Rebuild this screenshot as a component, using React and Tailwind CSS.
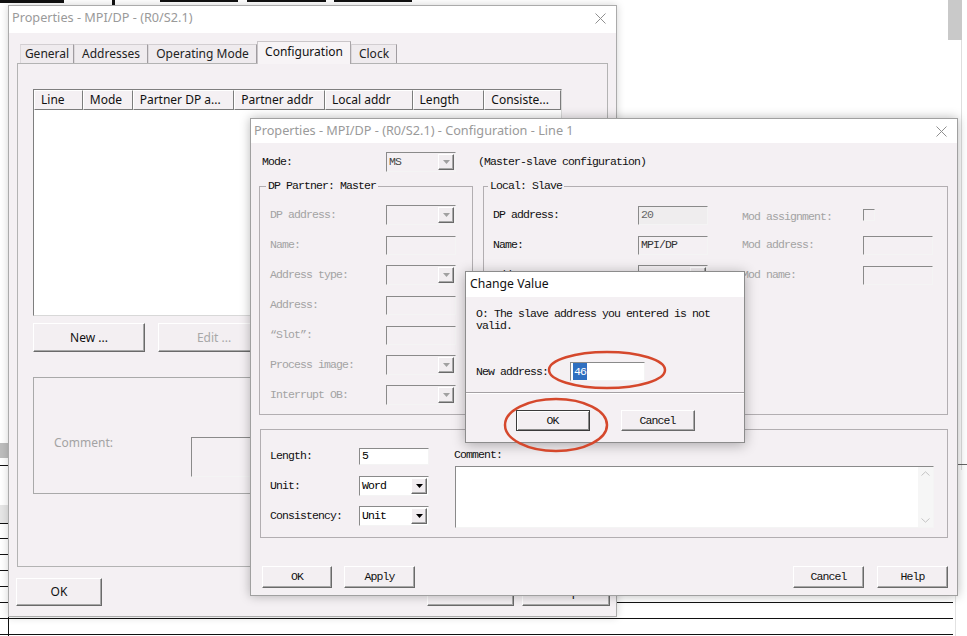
import React from "react";

const mono = "font-['Liberation_Mono','DejaVu_Sans_Mono',monospace] text-[11.5px] tracking-[-0.9px]";
const raised =
  "border border-t-[#ffffff] border-l-[#ffffff] border-b-[#6a6a6a] border-r-[#6a6a6a] shadow-[inset_-1px_-1px_0_#a8a8a8]";
const sunken =
  "border border-t-[#8a8a8a] border-l-[#8a8a8a] border-b-[#f4f4f4] border-r-[#f4f4f4]";

function CloseX({ color = "#8f8f8f" }) {
  return (
    <svg width="11" height="11" viewBox="0 0 11 11">
      <path d="M0.5 0.5L10.5 10.5M10.5 0.5L0.5 10.5" stroke={color} strokeWidth="1" />
    </svg>
  );
}

function Btn({ children, className = "", muted = false }) {
  return (
    <div
      className={`flex items-center justify-center bg-[#f3eff2] ${raised} ${
        muted ? "text-[#a8a8a8]" : "text-[#111]"
      } ${className}`}
    >
      {children}
    </div>
  );
}

function TextBox({ value = "", enabled = false, className = "" }) {
  return (
    <div
      className={`w-[70px] h-[19px] flex items-center pl-[2px] ${sunken} ${
        enabled ? "bg-white text-black" : "bg-[#f4f0f3] text-[#333]"
      } ${className}`}
    >
      {value}
    </div>
  );
}

function Combo({ value = "", enabled = false }) {
  return (
    <div
      className={`w-[70px] h-[20px] flex items-center ${sunken} ${
        enabled ? "bg-white text-black" : "bg-[#f4f0f3] text-[#444]"
      }`}
    >
      <span className="flex-1 pl-[2px]">{value}</span>
      <div className={`w-[16px] h-[16px] mr-[1px] flex items-center justify-center bg-[#f1edf0] ${raised}`}>
        <svg width="7" height="4" viewBox="0 0 7 4">
          <path d="M0 0H7L3.5 4Z" fill={enabled ? "#000" : "#a0a0a0"} />
        </svg>
      </div>
    </div>
  );
}

function Backdrop() {
  const hLines = [465, 523, 538, 554, 570, 586, 602];
  return (
    <svg className="absolute inset-0" width="967" height="636">
      <rect x="0" y="0" width="64" height="3" fill="#111" />
      <rect x="112" y="0" width="3" height="5" fill="#111" />
      <rect x="160" y="0" width="78" height="2" fill="#111" />
      <rect x="247" y="0" width="79" height="2" fill="#111" />
      <rect x="334" y="0" width="78" height="2" fill="#111" />
      <rect x="948" y="0" width="14" height="40" fill="#c9c9c9" />
      <line x1="961.5" y1="40" x2="961.5" y2="470" stroke="#dedede" />
      <line x1="955" y1="464.5" x2="967" y2="464.5" stroke="#666" />
      <rect x="0" y="443" width="8" height="15" fill="#bdbdbd" />
      <rect x="0" y="505" width="8" height="18" fill="#e6e6e6" />
      {hLines.map((y) => (
        <line key={y} x1="0" y1={y + 0.5} x2="8" y2={y + 0.5} stroke="#111" />
      ))}
      <line x1="8.5" y1="503" x2="8.5" y2="636" stroke="#111" />
      <line x1="617" y1="602.5" x2="953" y2="602.5" stroke="#111" />
      <line x1="0" y1="618.5" x2="953" y2="618.5" stroke="#111" />
      <line x1="0" y1="634.5" x2="953" y2="634.5" stroke="#111" />
      <line x1="955.5" y1="470" x2="955.5" y2="636" stroke="#e2e2e2" />
    </svg>
  );
}

function MainWindow() {
  const tabs = [
    ["General", "w-[54px]"],
    ["Addresses", "w-[74px]"],
    ["Operating Mode", "w-[109px]"],
    ["Configuration", "w-[94px]"],
    ["Clock", "w-[46px]"],
  ];
  const cols = [
    ["Line", "w-[49px]"],
    ["Mode", "w-[50px]"],
    ["Partner DP a...", "w-[102px]"],
    ["Partner addr", "w-[91px]"],
    ["Local addr", "w-[88px]"],
    ["Length", "w-[72px]"],
    ["Consiste...", "w-[77px]"],
  ];

  return (
    <div className="absolute left-[8px] top-[5px] w-[609px] h-[612px] flex flex-col border border-[#ababab] bg-[#f4f0f3] text-[12px] shadow-[0_0_8px_rgba(0,0,0,0.18)]">
      <div className="h-[27px] flex items-center justify-between bg-white pl-[3px] pr-[10px] pb-[3px] text-[12.7px] text-[#9a9a9a]">
        <span>Properties - MPI/DP - (R0/S2.1)</span>
        <CloseX />
      </div>

      <div className="flex-1 flex flex-col px-[8px] pt-[8px]">
        <div className="relative z-10 h-[22px] flex items-end pl-[3px]">
          {tabs.map(([label, w]) =>
            label === "Configuration" ? (
              <div
                key={label}
                className={`${w} h-[23px] -mb-[1px] flex items-center justify-center pb-[2px] border-t border-l border-r border-t-[#c9c5c8] border-l-[#c9c5c8] border-r-[#a9a5a8] bg-[#f7f4f6] text-[#111]`}
              >
                {label}
              </div>
            ) : (
              <div
                key={label}
                className={`${w} h-[19px] flex items-center justify-center border-t border-l border-r border-t-[#d2ced1] border-l-[#dcd8db] border-r-[#a09ca0] bg-[#efebee] text-[#222]`}
              >
                {label}
              </div>
            )
          )}
        </div>

        <div className="w-[591px] h-[504px] flex flex-col border border-[#b3b3b3] bg-[#f4f0f3] pl-[15px] pt-[25px]">
          <div className="w-[529px] h-[227px] flex flex-col border border-t-[#7e7e7e] border-l-[#7e7e7e] border-b-[#d8d8d8] border-r-[#d8d8d8] bg-white">
            <div className="h-[20px] flex">
              {cols.map(([label, w]) => (
                <div
                  key={label}
                  className={`${w} h-[20px] flex items-center pl-[6px] bg-[#f4f0f3] border-r border-b border-r-[#7c7c7c] border-b-[#7c7c7c] border-t border-l border-t-white border-l-white text-[#111] whitespace-nowrap overflow-hidden`}
                >
                  {label}
                </div>
              ))}
            </div>
          </div>

          <div className="mt-[7px] flex gap-[13px]">
            <Btn className="w-[112px] h-[29px]">New ...</Btn>
            <Btn className="w-[112px] h-[29px]" muted>
              Edit ...
            </Btn>
          </div>

          <div className="mt-[25px] w-[530px] h-[117px] flex items-start border border-[#a9a9a9] pl-[20px] pt-[58px]">
            <span className="w-[137px] leading-[14px] text-[#a3a3a3]">Comment:</span>
            <div className={`w-[300px] h-[40px] mt-[1px] bg-[#f4f0f3] ${sunken}`} />
          </div>
        </div>

        <div className="mt-[11px] -ml-[1px] -mr-[2px] flex justify-between">
          <Btn className="w-[86px] h-[28px]">OK</Btn>
          <div className="flex gap-[8px]">
            <Btn className="w-[87px] h-[28px]">Cancel</Btn>
            <Btn className="w-[88px] h-[28px]">Help</Btn>
          </div>
        </div>
      </div>
    </div>
  );
}

function LineWindow() {
  const partner = [
    ["DP address:", "combo"],
    ["Name:", "text"],
    ["Address type:", "combo"],
    ["Address:", "text"],
    ["\u201CSlot\u201D:", "text"],
    ["Process image:", "combo"],
    ["Interrupt OB:", "combo"],
  ];

  return (
    <div className="absolute left-[250px] top-[118px] w-[708px] h-[478px] flex flex-col border border-[#a0a0a0] bg-[#f4f0f3] shadow-[0_0_10px_rgba(0,0,0,0.28)]">
      <div className="h-[24px] flex items-center justify-between bg-white pl-[3px] pr-[10px] text-[12.7px] text-[#9a9a9a]">
        <span>Properties - MPI/DP - (R0/S2.1) - Configuration - Line 1</span>
        <CloseX />
      </div>

      <div className={`flex-1 flex flex-col px-[8px] pt-[9px] text-[#111] ${mono}`}>
        <div className="h-[19px] flex items-center">
          <span className="w-[127px] pl-[3px]">Mode:</span>
          <Combo value="MS" />
          <span className="ml-[22px]">(Master-slave configuration)</span>
        </div>

        <div className="mt-[9px] flex gap-[10px]">
          <fieldset className="w-[214px] border border-[#b2aeb1] pl-[10px] pt-[8px] pb-[4px]">
            <legend className="-ml-[4px] px-[2px] leading-[12px]">DP Partner: Master</legend>
            {partner.map(([label, kind]) => (
              <div key={label} className="h-[30px] flex items-center">
                <span className="w-[116px] text-[#a3a3a3]">{label}</span>
                {kind === "combo" ? <Combo /> : <TextBox />}
              </div>
            ))}
          </fieldset>

          <fieldset className="w-[465px] border border-[#b2aeb1] pl-[9px] pt-[8px]">
            <legend className="-ml-[5px] px-[2px] leading-[12px]">Local: Slave</legend>
            <div className="h-[30px] flex items-center">
              <span className="w-[145px]">DP address:</span>
              <TextBox value="20" className="!bg-[#efedee] !text-[#666]" />
              <span className="ml-[34px] w-[121px] text-[#a3a3a3] pt-[4px]">Mod assignment:</span>
              <div className={`w-[12px] h-[12px] bg-[#f4f0f3] ${sunken}`} />
            </div>
            <div className="h-[30px] flex items-center">
              <span className="w-[145px]">Name:</span>
              <TextBox value="MPI/DP" />
              <span className="ml-[34px] w-[121px] text-[#a3a3a3]">Mod address:</span>
              <TextBox />
            </div>
            <div className="h-[30px] flex items-center">
              <span className="w-[145px]">Address type:</span>
              <Combo />
              <span className="ml-[34px] w-[121px] text-[#a3a3a3]">Mod name:</span>
              <TextBox />
            </div>
          </fieldset>
        </div>

        <div className="mt-[14px] ml-[1px] w-[688px] h-[109px] flex border border-[#b2aeb1] pl-[9px] pt-[11px]">
          <div className="flex flex-col">
            <div className="h-[30px] flex items-center">
              <span className="w-[89px]">Length:</span>
              <TextBox value="5" enabled className="!h-[17px]" />
            </div>
            <div className="h-[30px] flex items-center">
              <span className="w-[89px]">Unit:</span>
              <Combo value="Word" enabled />
            </div>
            <div className="h-[30px] flex items-center">
              <span className="w-[89px]">Consistency:</span>
              <Combo value="Unit" enabled />
            </div>
          </div>
          <div className="ml-[25px] flex flex-col">
            <span className="mt-[8px] leading-[12px]">Comment:</span>
            <div className={`mt-[5px] ml-[1px] w-[479px] h-[62px] flex justify-end bg-white ${sunken}`}>
              <div className="w-[15px] flex flex-col justify-between items-center py-[4px] bg-[#f6f6f6]">
                <svg width="9" height="5" viewBox="0 0 9 5">
                  <path d="M0.5 4.5L4.5 0.8L8.5 4.5" fill="none" stroke="#c4c4c4" />
                </svg>
                <svg width="9" height="5" viewBox="0 0 9 5">
                  <path d="M0.5 0.5L4.5 4.2L8.5 0.5" fill="none" stroke="#c4c4c4" />
                </svg>
              </div>
            </div>
          </div>
        </div>

        <div className="mt-[28px] ml-[3px] mr-[1px] flex justify-between">
          <div className="flex gap-[12px]">
            <Btn className="w-[70px] h-[22px]">OK</Btn>
            <Btn className="w-[71px] h-[22px]">Apply</Btn>
          </div>
          <div className="flex gap-[13px]">
            <Btn className="w-[71px] h-[22px]">Cancel</Btn>
            <Btn className="w-[71px] h-[22px]">Help</Btn>
          </div>
        </div>
      </div>
    </div>
  );
}

function ChangeValue() {
  return (
    <div className="absolute left-[465px] top-[271px] w-[280px] h-[172px] flex flex-col border border-[#8c8c8c] bg-[#f4f0f3] shadow-[0_2px_12px_rgba(0,0,0,0.3)]">
      <div className="h-[25px] flex items-center bg-white pl-[4px] text-[12.2px] text-[#111]">Change Value</div>
      <div className={`flex-1 flex flex-col pt-[11px] text-[#111] ${mono}`}>
        <p className="w-[250px] pl-[10px] leading-[12px]">O: The slave address you entered is not valid.</p>
        <div className="mt-[30px] pl-[10px] h-[19px] flex items-center">
          <span className="w-[94px]">New address:</span>
          <div className={`w-[75px] h-[19px] flex items-center pl-[2px] bg-white ${sunken}`}>
            <span className="bg-[#2f6fc0] text-white px-[1px]">46</span>
          </div>
        </div>
        <div className="mt-[11px] border-t border-b border-t-[#a4a0a3] border-b-white" />
        <div className="mt-[16px] flex justify-center gap-[31px]">
          <Btn className="w-[74px] h-[21px] !border-[#3a3a3a] shadow-[inset_1px_1px_0_#fff,inset_-1px_-1px_0_#8a8a8a]">
            OK
          </Btn>
          <Btn className="w-[74px] h-[21px]">Cancel</Btn>
        </div>
      </div>
    </div>
  );
}

function Marks() {
  return (
    <svg className="absolute inset-0 pointer-events-none" width="967" height="636">
      <ellipse cx="607" cy="370" rx="58" ry="18" fill="none" stroke="#d5482c" strokeWidth="2.5" />
      <ellipse cx="556" cy="425" rx="51" ry="26" fill="none" stroke="#d5482c" strokeWidth="2.5" />
    </svg>
  );
}

export default function App() {
  return (
    <div className="relative w-[967px] h-[636px] overflow-hidden bg-white font-['Noto_Sans',sans-serif]">
      <Backdrop />
      <MainWindow />
      <LineWindow />
      <ChangeValue />
      <Marks />
    </div>
  );
}
